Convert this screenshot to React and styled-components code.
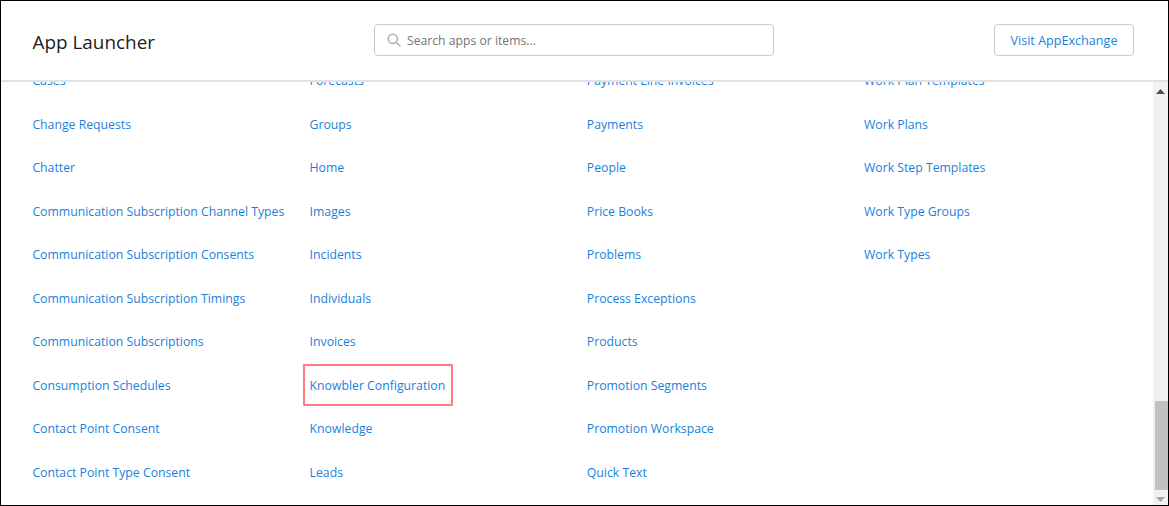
import React from "react";
import styled, { createGlobalStyle } from "styled-components";

const Global = createGlobalStyle`
  html, body { margin: 0; padding: 0; background: #fff; height: 100%; overflow: hidden; }
  #root { height: 100%; }
`;

const Frame = styled.div`
  box-sizing: border-box;
  width: 1169px;
  height: 506px;
  border: 1px solid #000;
  background: #fff;
  display: flex;
  flex-direction: column;
  overflow: hidden;
  font-family: "Open Sans", "Noto Sans", sans-serif;
`;

const Header = styled.header`
  flex: none;
  box-sizing: border-box;
  height: 81px;
  border-bottom: 2px solid #e2e2e2;
  display: grid;
  grid-template-columns: 373px 400px 1fr;
  align-items: center;
  padding: 0 34px 0 0;
  background: #fff;
  position: relative;
  z-index: 1;
`;

const Title = styled.h1`
  margin: 3px 0 0 31.5px;
  font-size: 18.9px;
  font-weight: 400;
  line-height: 28px;
  color: #1d1d1d;
`;

const SearchBox = styled.label`
  box-sizing: border-box;
  height: 32px;
  margin-bottom: 1px;
  display: flex;
  align-items: center;
  gap: 6px;
  padding: 0 12px;
  border: 1px solid #c9c9c9;
  border-radius: 4px;
  font-size: 12.2px;
  color: #747474;
`;

const SearchIcon = styled.svg`
  width: 14px;
  height: 14px;
  flex: none;
  color: #aeaeae;
`;

const ButtonSlot = styled.div`
  display: flex;
  justify-content: flex-end;
`;

const Button = styled.button`
  box-sizing: border-box;
  width: 140px;
  height: 32px;
  margin-bottom: 1px;
  padding: 0;
  background: #fff;
  border: 1px solid #c9c9c9;
  border-radius: 4px;
  font-family: inherit;
  font-size: 12.6px;
  color: #1a7fdc;
`;

const Body = styled.div`
  flex: 1;
  min-height: 0;
  display: flex;
`;

const ListViewport = styled.div`
  flex: 1;
  min-width: 0;
  overflow: hidden;
`;

const List = styled.ul`
  list-style: none;
  margin: -22.3px 0 0;
  padding: 0 0 0 31.4px;
  display: grid;
  grid-auto-flow: column;
  grid-template-rows: repeat(10, 43.5px);
  grid-auto-columns: 277.2px;
`;

const Item = styled.li`
  display: flex;
  align-items: center;
`;

const Link = styled.a`
  position: relative;
  font-size: 12.25px;
  line-height: 18px;
  white-space: nowrap;
  color: #1a7fdc;
  ${(p) =>
    p.$marked &&
    `
    &::after {
      content: "";
      position: absolute;
      top: -13px;
      bottom: -11px;
      left: -7px;
      right: -8px;
      border: 2px solid #ff7b7f;
      border-radius: 1px;
    }
  `}
`;

const Scrollbar = styled.div`
  flex: none;
  width: 15px;
  background: #f1f1f1;
  position: relative;
`;

const Arrow = styled.svg`
  position: absolute;
  left: 3px;
  width: 9px;
  height: 5px;
  ${(p) => (p.$down ? "bottom: 3px;" : "top: 7px;")}
`;

const Thumb = styled.div`
  position: absolute;
  top: 319px;
  left: 2px;
  right: 0;
  height: 89px;
  background: #c1c1c1;
`;

const columns = [
  ["Cases", "Change Requests", "Chatter", "Communication Subscription Channel Types", "Communication Subscription Consents", "Communication Subscription Timings", "Communication Subscriptions", "Consumption Schedules", "Contact Point Consent", "Contact Point Type Consent"],
  ["Forecasts", "Groups", "Home", "Images", "Incidents", "Individuals", "Invoices", "Knowbler Configuration", "Knowledge", "Leads"],
  ["Payment Line Invoices", "Payments", "People", "Price Books", "Problems", "Process Exceptions", "Products", "Promotion Segments", "Promotion Workspace", "Quick Text"],
  ["Work Plan Templates", "Work Plans", "Work Step Templates", "Work Type Groups", "Work Types"],
];

export default function App() {
  return (
    <>
      <Global />
      <Frame>
        <Header>
          <Title>App Launcher</Title>
          <SearchBox>
            <SearchIcon viewBox="0 0 14 14" fill="none" stroke="currentColor" strokeWidth="1.5" strokeLinecap="round">
              <circle cx="5.8" cy="5.8" r="4.6" />
              <path d="M9.2 9.2 L13 13" />
            </SearchIcon>
            Search apps or items...
          </SearchBox>
          <ButtonSlot>
            <Button>Visit AppExchange</Button>
          </ButtonSlot>
        </Header>
        <Body>
          <ListViewport>
            <List>
              {columns.map((col, c) => {
                const cells = [...col, ...Array(10 - col.length).fill(null)];
                return cells.map((name, i) => (
                  <Item key={`${c}-${i}`}>
                    {name && <Link $marked={name === "Knowbler Configuration"}>{name}</Link>}
                  </Item>
                ));
              })}
            </List>
          </ListViewport>
          <Scrollbar>
            <Arrow viewBox="0 0 9 5"><path d="M4.5 0 L9 5 L0 5 Z" fill="#505050" /></Arrow>
            <Thumb />
            <Arrow $down viewBox="0 0 9 5"><path d="M0 0 L9 0 L4.5 5 Z" fill="#a3a3a3" /></Arrow>
          </Scrollbar>
        </Body>
      </Frame>
    </>
  );
}
